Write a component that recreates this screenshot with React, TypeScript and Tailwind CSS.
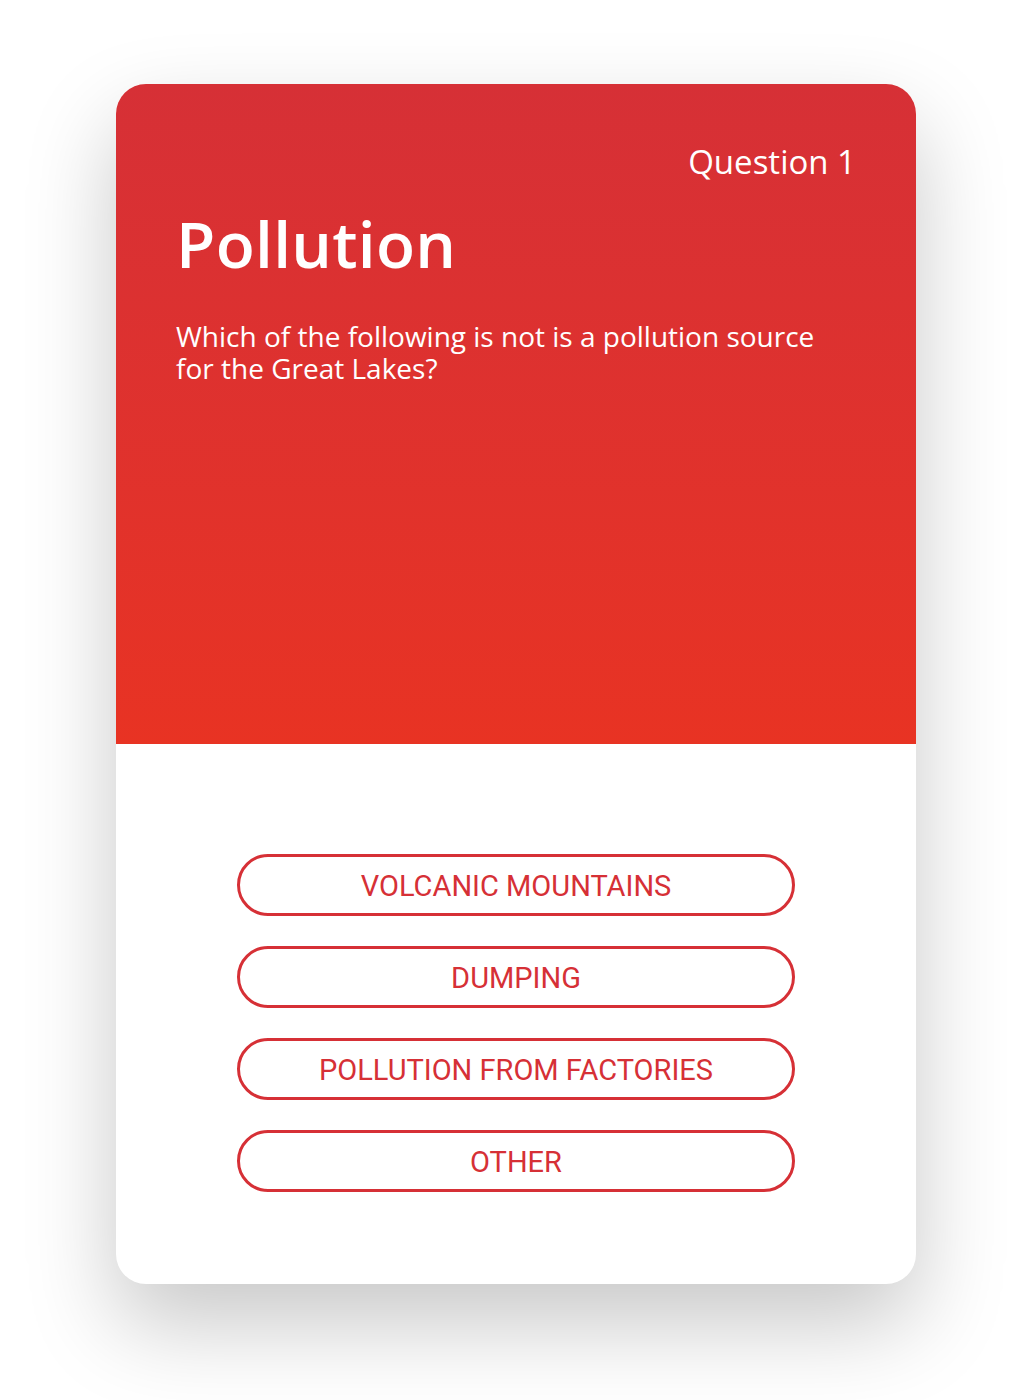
const answers = ["Volcanic Mountains", "Dumping", "Pollution from Factories", "Other"];

export default function App() {
  return (
    <div className="min-h-[1400px] bg-white pt-[84px] pb-[116px]">
      <div className="ml-[116px] flex h-[1200px] w-[800px] flex-col overflow-hidden rounded-[30px] bg-white shadow-[0_40px_90px_rgba(0,0,0,0.22)]">
        <div className="flex h-[660px] flex-col bg-gradient-to-b from-[#d63036] to-[#e83323] px-[60px] pt-[56px] text-white [font-family:'Open_Sans',sans-serif]">
          <p className="self-end text-[33px] leading-[44px] font-normal">Question 1</p>
          <h1 className="mt-[20px] text-[64px] leading-[80px] font-semibold tracking-[0.3px]">Pollution</h1>
          <p className="mt-[36px] max-w-[660px] text-[28px] leading-[32px]">
            Which of the following is not is a pollution source for the Great Lakes?
          </p>
        </div>
        <div className="flex flex-1 flex-col items-center gap-[30px] pt-[110px]">
          {answers.map((a) => (
            <button
              key={a}
              className="flex h-[62px] w-[558px] items-center justify-center rounded-full border-[3px] border-[#d63036] pt-[3px] text-[29px] text-[#d63036] uppercase [font-family:Roboto,sans-serif]"
            >
              {a}
            </button>
          ))}
        </div>
      </div>
    </div>
  );
}
